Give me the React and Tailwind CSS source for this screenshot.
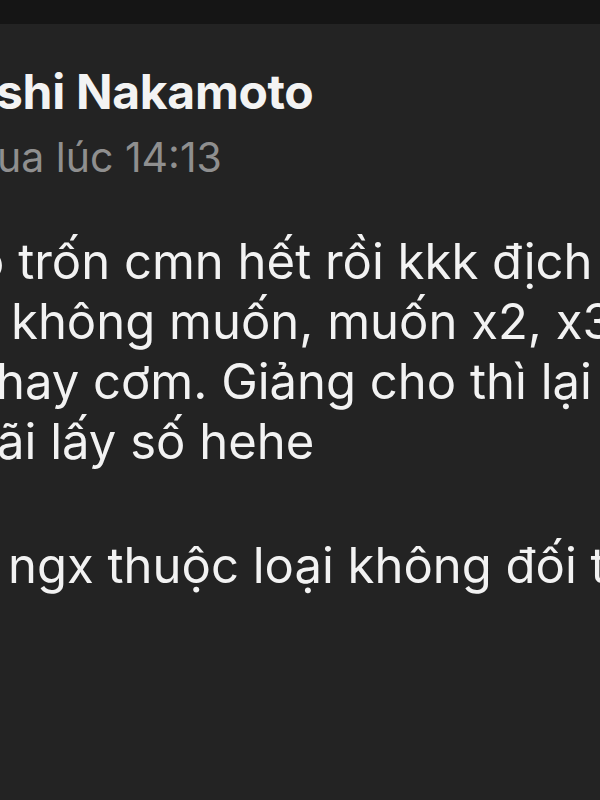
const lines = [
  { text: "o trốn cmn hết rồi kkk địch", ml: "ml-[-25px]" },
  { text: "không muốn, muốn x2, x3", ml: "ml-[11px]" },
  { text: "hay cơm. Giảng cho thì lại", ml: "ml-[-4px]" },
  { text: "ãi lấy số hehe", ml: "ml-[-3px]" },
];

export default function App() {
  return (
    <div
      className="w-[600px] h-[800px] overflow-hidden bg-[#232323] flex flex-col"
      style={{ fontFamily: "Inter, 'Noto Sans', sans-serif" }}
    >
      <div className="h-[24px] bg-[#151515] shrink-0" />

      <div className="pt-[43px] whitespace-nowrap">
        <div className="ml-[-4px] text-[48px] leading-[50px] font-bold text-[#f3f3f3] tracking-[-0.3px]">
          shi Nakamoto
        </div>
        <div className="ml-[-3px] mt-[15px] text-[41px] leading-[50px] text-[#8f8f8f]">
          ua lúc 14:13
        </div>

        <div className="mt-[50px] text-[49px] leading-[60px] text-[#f2f2f2]">
          {lines.map((l, i) => (
            <div key={i} className={l.ml}>{l.text}</div>
          ))}
          <div className="h-[64px]" />
          <div className="ml-[8px]">ngx thuộc loại không đối t</div>
        </div>
      </div>
    </div>
  );
}
